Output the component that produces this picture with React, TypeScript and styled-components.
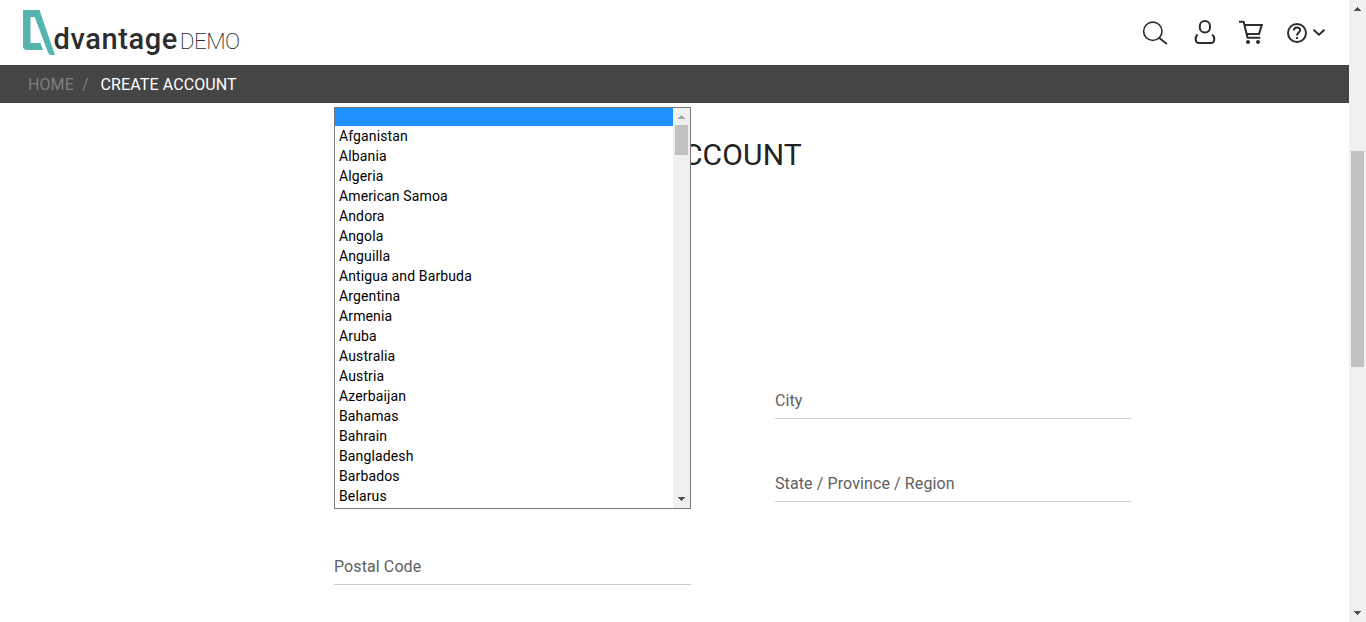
import React from "react";
import styled, { createGlobalStyle } from "styled-components";

const GlobalStyle = createGlobalStyle`
  * { box-sizing: border-box; }
  body { margin: 0; background: #fff; font-family: Roboto, "Liberation Sans", sans-serif; overflow: hidden; }
`;

const Page = styled.div`
  display: flex;
  height: 622px;
  width: 100%;
`;
const Main = styled.div`
  flex: 1;
  min-width: 0;
`;
const Header = styled.header`
  height: 65px;
  display: flex;
  justify-content: space-between;
  padding: 0 23px;
`;
const Logo = styled.div`
  display: flex;
  align-items: flex-start;
  padding-top: 10px;
`;
const LogoMark = styled.svg`
  display: block;
  width: 32px;
  height: 46px;
  flex: none;
`;
const LogoName = styled.span`
  margin: 11px 0 0 -1.5px;
  font-size: 29px;
  font-weight: 500;
  line-height: 36px;
  letter-spacing: 0.6px;
  color: #2d2d2d;
`;
const LogoTag = styled.span`
  margin: 13px 0 0 2px;
  font-size: 22.5px;
  font-weight: 200;
  line-height: 37px;
  letter-spacing: -0.6px;
  color: #2d2d2d;
`;
const Actions = styled.nav`
  display: flex;
  align-items: flex-start;
  padding-top: 17px;
`;
const Icon = styled.svg<{ $gap?: number }>`
  display: block;
  fill: none;
  stroke: #2d2d2d;
  stroke-width: 2;
  margin-left: ${(p) => p.$gap ?? 0}px;
`;
const Breadcrumb = styled.div`
  height: 38px;
  background: #454545;
  padding: 2px 0 0 28px;
  display: flex;
  align-items: center;
  font-size: 16px;
  line-height: 20px;
  letter-spacing: 0.1px;
  color: #808080;
`;
const Divider = styled.span`
  margin: 0 12px 0 8px;
`;
const Current = styled.span`
  color: #fff;
`;
const Title = styled.h1`
  margin: 32px 0 0;
  text-align: center;
  font-size: 30px;
  line-height: 40px;
  letter-spacing: 0.15px;
  font-weight: 400;
  color: #222;
`;
const Form = styled.div`
  margin: 161px 0 0 334px;
  width: 797px;
  display: grid;
  grid-template-columns: 357px 356px;
  column-gap: 84px;
`;
const Field = styled.div`
  height: 83px;
  padding-top: 55px;
  font-size: 16px;
  line-height: 20px;
  letter-spacing: 0.1px;
  color: #606060;
  border-bottom: 1px solid #ccc;
`;
const CountryField = styled(Field)`
  position: relative;
`;
const Options = styled.div`
  position: absolute;
  left: 0;
  bottom: -91px;
  width: 357px;
  height: 402px;
  border: 1px solid #767676;
  background: #fff;
  display: flex;
`;
const OptionList = styled.ul`
  flex: 1;
  margin: 0;
  padding: 0;
  list-style: none;
`;
const Option = styled.li<{ $selected?: boolean }>`
  height: ${(p) => (p.$selected ? 18 : 20)}px;
  padding-left: 4px;
  font-size: 14px;
  line-height: 20px;
  letter-spacing: 0.13px;
  color: #000;
  background: ${(p) => (p.$selected ? "#1e90ff" : "transparent")};
`;
const Track = styled.div`
  width: 17px;
  flex: none;
  height: 100%;
  background: #f0f0f0;
  display: flex;
  flex-direction: column;
  align-items: center;
`;
const Thumb = styled.div<{ $top: number; $size: number }>`
  width: 13px;
  height: ${(p) => p.$size}px;
  margin: ${(p) => p.$top}px 0 auto;
  background: #c1c1c1;
`;
const Arrow = styled.svg`
  display: block;
  width: 17px;
  height: 17px;
  flex: none;
`;

function Scrollbar({ top, size, faded }: { top: number; size: number; faded?: boolean }) {
  return (
    <Track>
      <Arrow viewBox="0 0 17 17" shapeRendering="crispEdges">
        <path d="M5 11h7v-1h-1v-1h-1v-1h-1v-1h-1v1h-1v1h-1v1h-1z" fill={faded ? "#a3a3a3" : "#505050"} />
      </Arrow>
      <Thumb $top={top} $size={size} />
      <Arrow viewBox="0 0 17 17" shapeRendering="crispEdges">
        <path d="M5 6h7v1h-1v1h-1v1h-1v1h-1v-1h-1v-1h-1v-1h-1z" fill="#505050" />
      </Arrow>
    </Track>
  );
}

const countries = [
  "Afganistan", "Albania", "Algeria", "American Samoa", "Andora", "Angola", "Anguilla",
  "Antigua and Barbuda", "Argentina", "Armenia", "Aruba", "Australia", "Austria",
  "Azerbaijan", "Bahamas", "Bahrain", "Bangladesh", "Barbados", "Belarus",
];

export default function App() {
  return (
    <Page>
      <GlobalStyle />
      <Main>
        <Header>
          <Logo>
            <LogoMark viewBox="0 0 32 46">
              <path fillRule="evenodd" fill="#55b5ae" d="M0 0H16.5L32 45H28Q26 45 25 42.5L11.7 7H7.5V33H17.5L20 40H4Q0 40 0 36Z" />
            </LogoMark>
            <LogoName>dvantage</LogoName>
            <LogoTag>DEMO</LogoTag>
          </Logo>
          <Actions>
            <Icon width="28" height="32" viewBox="0 0 28 32">
              <circle cx="11.8" cy="14.3" r="9.2" strokeWidth="1.6" />
              <path d="M18 20.8L25.9 27" strokeWidth="1.9" />
            </Icon>
            <Icon $gap={25} width="22" height="32" viewBox="0 0 22 32">
              <rect x="5.8" y="4" width="10.2" height="11.6" rx="5" />
              <path d="M3.5 17.5C.9 20.2.7 26 5 26H17C21.2 26 21 20.2 18.3 17.5" />
            </Icon>
            <Icon $gap={23} width="26" height="32" viewBox="0 0 26 32">
              <path d="M0 4.8H4.6L8.6 20.8H21.3M5 7.9H22.8L20 17H7.6" />
              <circle cx="9" cy="25" r="2" fill="#2d2d2d" stroke="none" />
              <circle cx="19" cy="25" r="2" fill="#2d2d2d" stroke="none" />
            </Icon>
            <Icon $gap={21} width="40" height="32" viewBox="0 0 40 32">
              <circle cx="11" cy="16" r="9" />
              <path d="M7.9 13.4C7.9 9.5 14.1 9.5 14.1 13.2C14.1 15.5 11 15.7 11 18.5M11 20V22" />
              <path d="M27.5 12.7L33 17.7L38.5 12.7" />
            </Icon>
          </Actions>
        </Header>
        <Breadcrumb>
          <span>HOME</span>
          <Divider>/</Divider>
          <Current>CREATE ACCOUNT</Current>
        </Breadcrumb>
        <Title>CREATE ACCOUNT</Title>
        <Form>
          <CountryField>
            <Options>
              <OptionList>
                <Option $selected />
                {countries.map((name) => (
                  <Option key={name}>{name}</Option>
                ))}
              </OptionList>
              <Scrollbar top={0} size={30} faded />
            </Options>
          </CountryField>
          <Field>City</Field>
          <Field />
          <Field>State / Province / Region</Field>
          <Field>Postal Code</Field>
        </Form>
      </Main>
      <Scrollbar top={134} size={216} />
    </Page>
  );
}
